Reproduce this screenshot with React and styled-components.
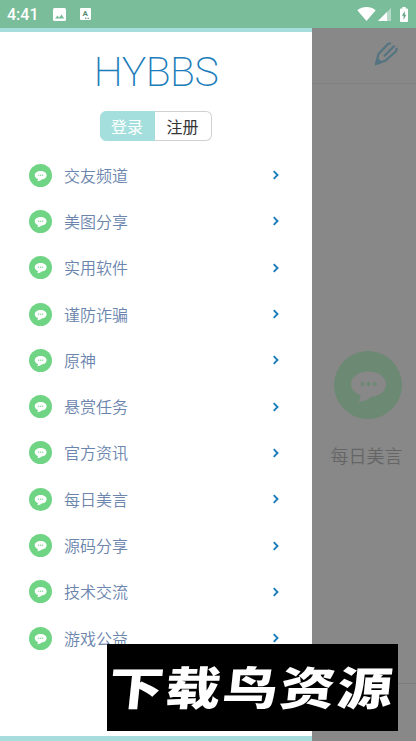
import React from "react";
import styled, { createGlobalStyle } from "styled-components";

const GlobalStyle = createGlobalStyle`
  * {
    box-sizing: border-box;
  }

  body {
    margin: 0;
    overflow: hidden;
    font-family: Roboto, "Noto Sans CJK SC", sans-serif;
  }
`;

const Screen = styled.div`
  position: relative;
  display: flex;
  flex-direction: column;
  width: 416px;
  height: 741px;
  overflow: hidden;
  background: #fff;
`;

const StatusBar = styled.header`
  display: flex;
  align-items: center;
  height: 28px;
  flex: none;
  padding: 0 8px 0 7px;
  background: #7abd9a;
  color: #fff;

  svg {
    display: block;
    flex: none;
  }
`;

const Clock = styled.span`
  width: 46px;
  padding-top: 1px;
  font-size: 16px;
  font-weight: 500;
  line-height: 28px;
`;

const StatusIcons = styled.div`
  display: flex;
  align-items: center;
  gap: ${({ $gap }) => $gap}px;
  margin-left: ${({ $right }) => ($right ? "auto" : "0")};
`;

const Body = styled.div`
  display: flex;
  flex: 1;
  min-height: 0;
`;

const Drawer = styled.aside`
  display: flex;
  flex-direction: column;
  width: 312px;
  border-top: 4px solid #a7dedd;
  border-bottom: 5px solid #a7dedd;
  background: #fff;
`;

const Logo = styled.h1`
  height: 79px;
  margin: 0;
  padding-top: 15px;
  color: #1b7dba;
  font-size: 41px;
  font-weight: 200;
  line-height: 50px;
  letter-spacing: -0.5px;
  text-align: center;
`;

const AuthButtons = styled.div`
  display: flex;
  align-self: center;
  width: 112px;
  height: 30px;
`;

const AuthButton = styled.button`
  width: ${({ $active }) => ($active ? "55px" : "57px")};
  padding: 0 1px 1px 0;
  border: 1px solid ${({ $active }) => ($active ? "#a5dfdd" : "#cfd0d0")};
  border-left-width: ${({ $active }) => ($active ? "1px" : "0")};
  border-radius: ${({ $active }) => ($active ? "6px 0 0 6px" : "0 6px 6px 0")};
  background: ${({ $active }) => ($active ? "#a5dfdd" : "#fff")};
  color: ${({ $active }) => ($active ? "#fff" : "#333")};
  font-family: "Noto Sans CJK SC", sans-serif;
  font-size: 16px;
  font-weight: 400;
  line-height: 26px;
`;

const Menu = styled.nav`
  display: flex;
  flex-direction: column;
  margin-top: 11px;
`;

const MenuItem = styled.div`
  display: flex;
  align-items: center;
  height: 46.3px;
  padding: 0 32px 0 29px;
  color: #6b85ad;
  font-size: 16px;
`;

const MenuLabel = styled.span`
  flex: 1;
  margin-left: 12px;
  padding-bottom: 1px;
  font-family: "Noto Sans CJK SC", sans-serif;
  font-weight: 350;
  line-height: 24px;
`;

const Page = styled.main`
  display: flex;
  flex-direction: column;
  flex: 1;
  background: #888;
`;

const PageHeader = styled.div`
  display: flex;
  justify-content: flex-end;
  height: 56px;
  padding: 13px 17px 0 0;
  border-bottom: 1px solid #7f7f7f;
`;

const Channel = styled.section`
  display: flex;
  flex-direction: column;
  align-items: center;
  flex: 1;
  padding: 267px 0 0 7px;
`;

const ChannelName = styled.span`
  margin: 24px 2px 0 0;
  color: #656565;
  font-size: 18px;
  font-weight: 350;
  line-height: 28px;
`;

const PageFooter = styled.div`
  height: 58px;
  border-top: 1px solid #7b7b7b;
`;

const Banner = styled.div`
  position: absolute;
  top: 644px;
  left: 107px;
  display: flex;
  align-items: center;
  justify-content: center;
  width: 291px;
  height: 87px;
  background: #000;
`;

const BannerText = styled.span`
  color: #fff;
  font-family: "Noto Sans CJK SC", sans-serif;
  font-size: 50px;
  font-weight: 900;
  line-height: 60px;
  letter-spacing: 2px;
  white-space: nowrap;
  transform: translate(-1px, -3px) skewX(-6deg) scale(1.1, 0.91);
`;

function BubbleIcon({ size, circle, bubble, dots }) {
  return (
    <svg width={size} height={size} viewBox="0 0 68 68">
      <circle cx="34" cy="34" r="34" fill={circle} />
      <path
        d="M34.500 20.500C24.500 20.500 17 26 17 33c0 5 3.800 9.200 9.500 11.200 0 2.700-.7 4.700-2 6.800 5.500-.6 9.500-2.500 13-5.300C46.500 44.800 52 39.700 52 33c0-7-7.800-12.500-17.500-12.500z"
        fill={bubble}
      />
      <circle cx="28.500" cy="33" r="2" fill={dots} />
      <circle cx="34.500" cy="33" r="2" fill={dots} />
      <circle cx="40.500" cy="33" r="2" fill={dots} />
    </svg>
  );
}

function ChevronIcon() {
  return (
    <svg width="8" height="10" viewBox="0 0 8 10">
      <path d="M1.700 1.200 5.500 5 1.700 8.800" fill="none" stroke="#1b7dba" strokeWidth="1.900" />
    </svg>
  );
}

function PencilIcon() {
  return (
    <svg width="25" height="26" viewBox="0 0 25 26" fill="none" stroke="#547482">
      <path d="M2 23 4.500 13 14 3l3-.7M2 23l9.500-3.500L22 10.200l1-3.200" strokeWidth="2.200" />
      <path d="M10 15.200 20.500 4.800" strokeWidth="2.200" />
      <path d="m.6 24.400 2.400-8 6 5z" fill="#547482" stroke="none" />
    </svg>
  );
}

function PhotoIcon() {
  return (
    <svg width="13" height="13" viewBox="0 0 13 13">
      <rect width="13" height="13" rx="1.500" fill="#fff" />
      <path d="m2 10.500 2.500-3 1.700 2 2.300-3 2.700 4z" fill="#7abd9a" />
    </svg>
  );
}

function LetterIcon() {
  return (
    <svg width="11" height="12" viewBox="0 0 11 12">
      <rect width="11" height="12" rx="1" fill="#fff" />
      <text x="5.300" y="8.300" fill="#568b70" fontSize="8" fontWeight="700" textAnchor="middle">
        A
      </text>
      <path d="M5 10.300h1.500M7.500 10.300H9" stroke="#568b70" />
    </svg>
  );
}

function WifiIcon() {
  return (
    <svg width="19" height="14" viewBox="0 0 19 14">
      <path d="M.3 3.200C5.700-1 13.300-1 18.700 3.200L9.500 14z" fill="#fff" />
    </svg>
  );
}

function SignalIcon() {
  return (
    <svg width="13" height="13" viewBox="0 0 13 13">
      <path d="M0 13 13 0v13z" fill="#b6dac7" />
      <path d="m0 13 9-9v9z" fill="#fff" />
    </svg>
  );
}

function BatteryIcon() {
  return (
    <svg width="8" height="15" viewBox="0 0 8 15">
      <path d="M2.300 0h3.400v1.500H7q1 0 1 1V14q0 1-1 1H1q-1 0-1-1V2.500q0-1 1-1h1.300z" fill="#fff" />
      <path d="M4.800 4 1.900 8.800h1.700v4l2.700-5H4.800z" fill="#67a486" />
    </svg>
  );
}

const channels = [
  "交友频道",
  "美图分享",
  "实用软件",
  "谨防诈骗",
  "原神",
  "悬赏任务",
  "官方资讯",
  "每日美言",
  "源码分享",
  "技术交流",
  "游戏公益",
];

function App() {
  return (
    <>
      <GlobalStyle />
      <Screen>
        <StatusBar>
          <Clock>4:41</Clock>
          <StatusIcons $gap={14}>
            <PhotoIcon />
            <LetterIcon />
          </StatusIcons>
          <StatusIcons $right $gap={9}>
            <StatusIcons $gap={2}>
              <WifiIcon />
              <SignalIcon />
            </StatusIcons>
            <BatteryIcon />
          </StatusIcons>
        </StatusBar>
        <Body>
          <Drawer>
            <Logo>HYBBS</Logo>
            <AuthButtons>
              <AuthButton $active>登录</AuthButton>
              <AuthButton>注册</AuthButton>
            </AuthButtons>
            <Menu>
              {channels.map((name) => (
                <MenuItem key={name}>
                  <BubbleIcon size={23} circle="#70d485" bubble="#fff" dots="#70d485" />
                  <MenuLabel>{name}</MenuLabel>
                  <ChevronIcon />
                </MenuItem>
              ))}
            </Menu>
          </Drawer>
          <Page>
            <PageHeader>
              <PencilIcon />
            </PageHeader>
            <Channel>
              <BubbleIcon size={68} circle="#6c8973" bubble="#888" dots="#6c8973" />
              <ChannelName>每日美言</ChannelName>
            </Channel>
            <PageFooter />
          </Page>
        </Body>
        <Banner>
          <BannerText>下载鸟资源</BannerText>
        </Banner>
      </Screen>
    </>
  );
}

export default App;
